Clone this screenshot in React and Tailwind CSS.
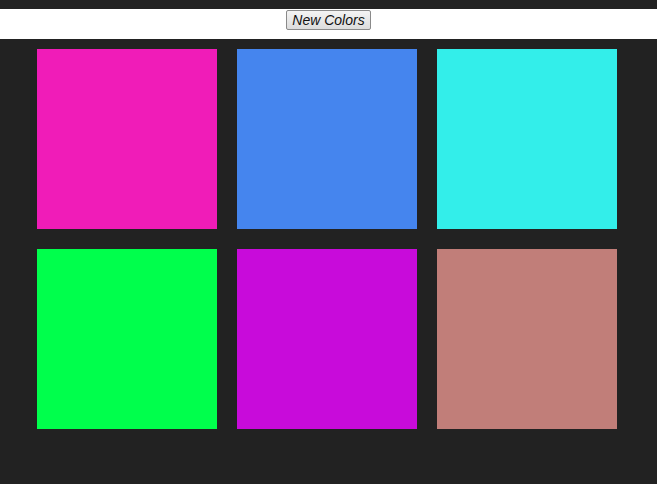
import React from 'react';

const COLORS = ['#f01cb8', '#4585ee', '#33eeea', '#00ff4c', '#c80bda', '#c17e79'];

export default function App() {
    return (
        <div className="min-h-[484px] bg-[#222222] pt-[9px]" style={{ fontFamily: '"Liberation Sans", Arial, sans-serif' }}>
            {/* Toolbar */}
            <div className="h-[30px] bg-white flex justify-center items-start pt-px">
                <button className="h-[20px] px-[5px] text-[14px] italic text-[#111] leading-none border border-[#8a8a8a] rounded-[2px] bg-gradient-to-b from-[#f4f4f4] to-[#dcdcdc]">
                    New Colors
                </button>
            </div>

            {/* Swatches */}
            <div className="grid grid-cols-[repeat(3,180px)] gap-5 pl-[37px] pt-[10px]">
                {COLORS.map((c, i) => (
                    <div key={i} className="w-[180px] h-[180px]" style={{ backgroundColor: c }} />
                ))}
            </div>
        </div>
    );
}
